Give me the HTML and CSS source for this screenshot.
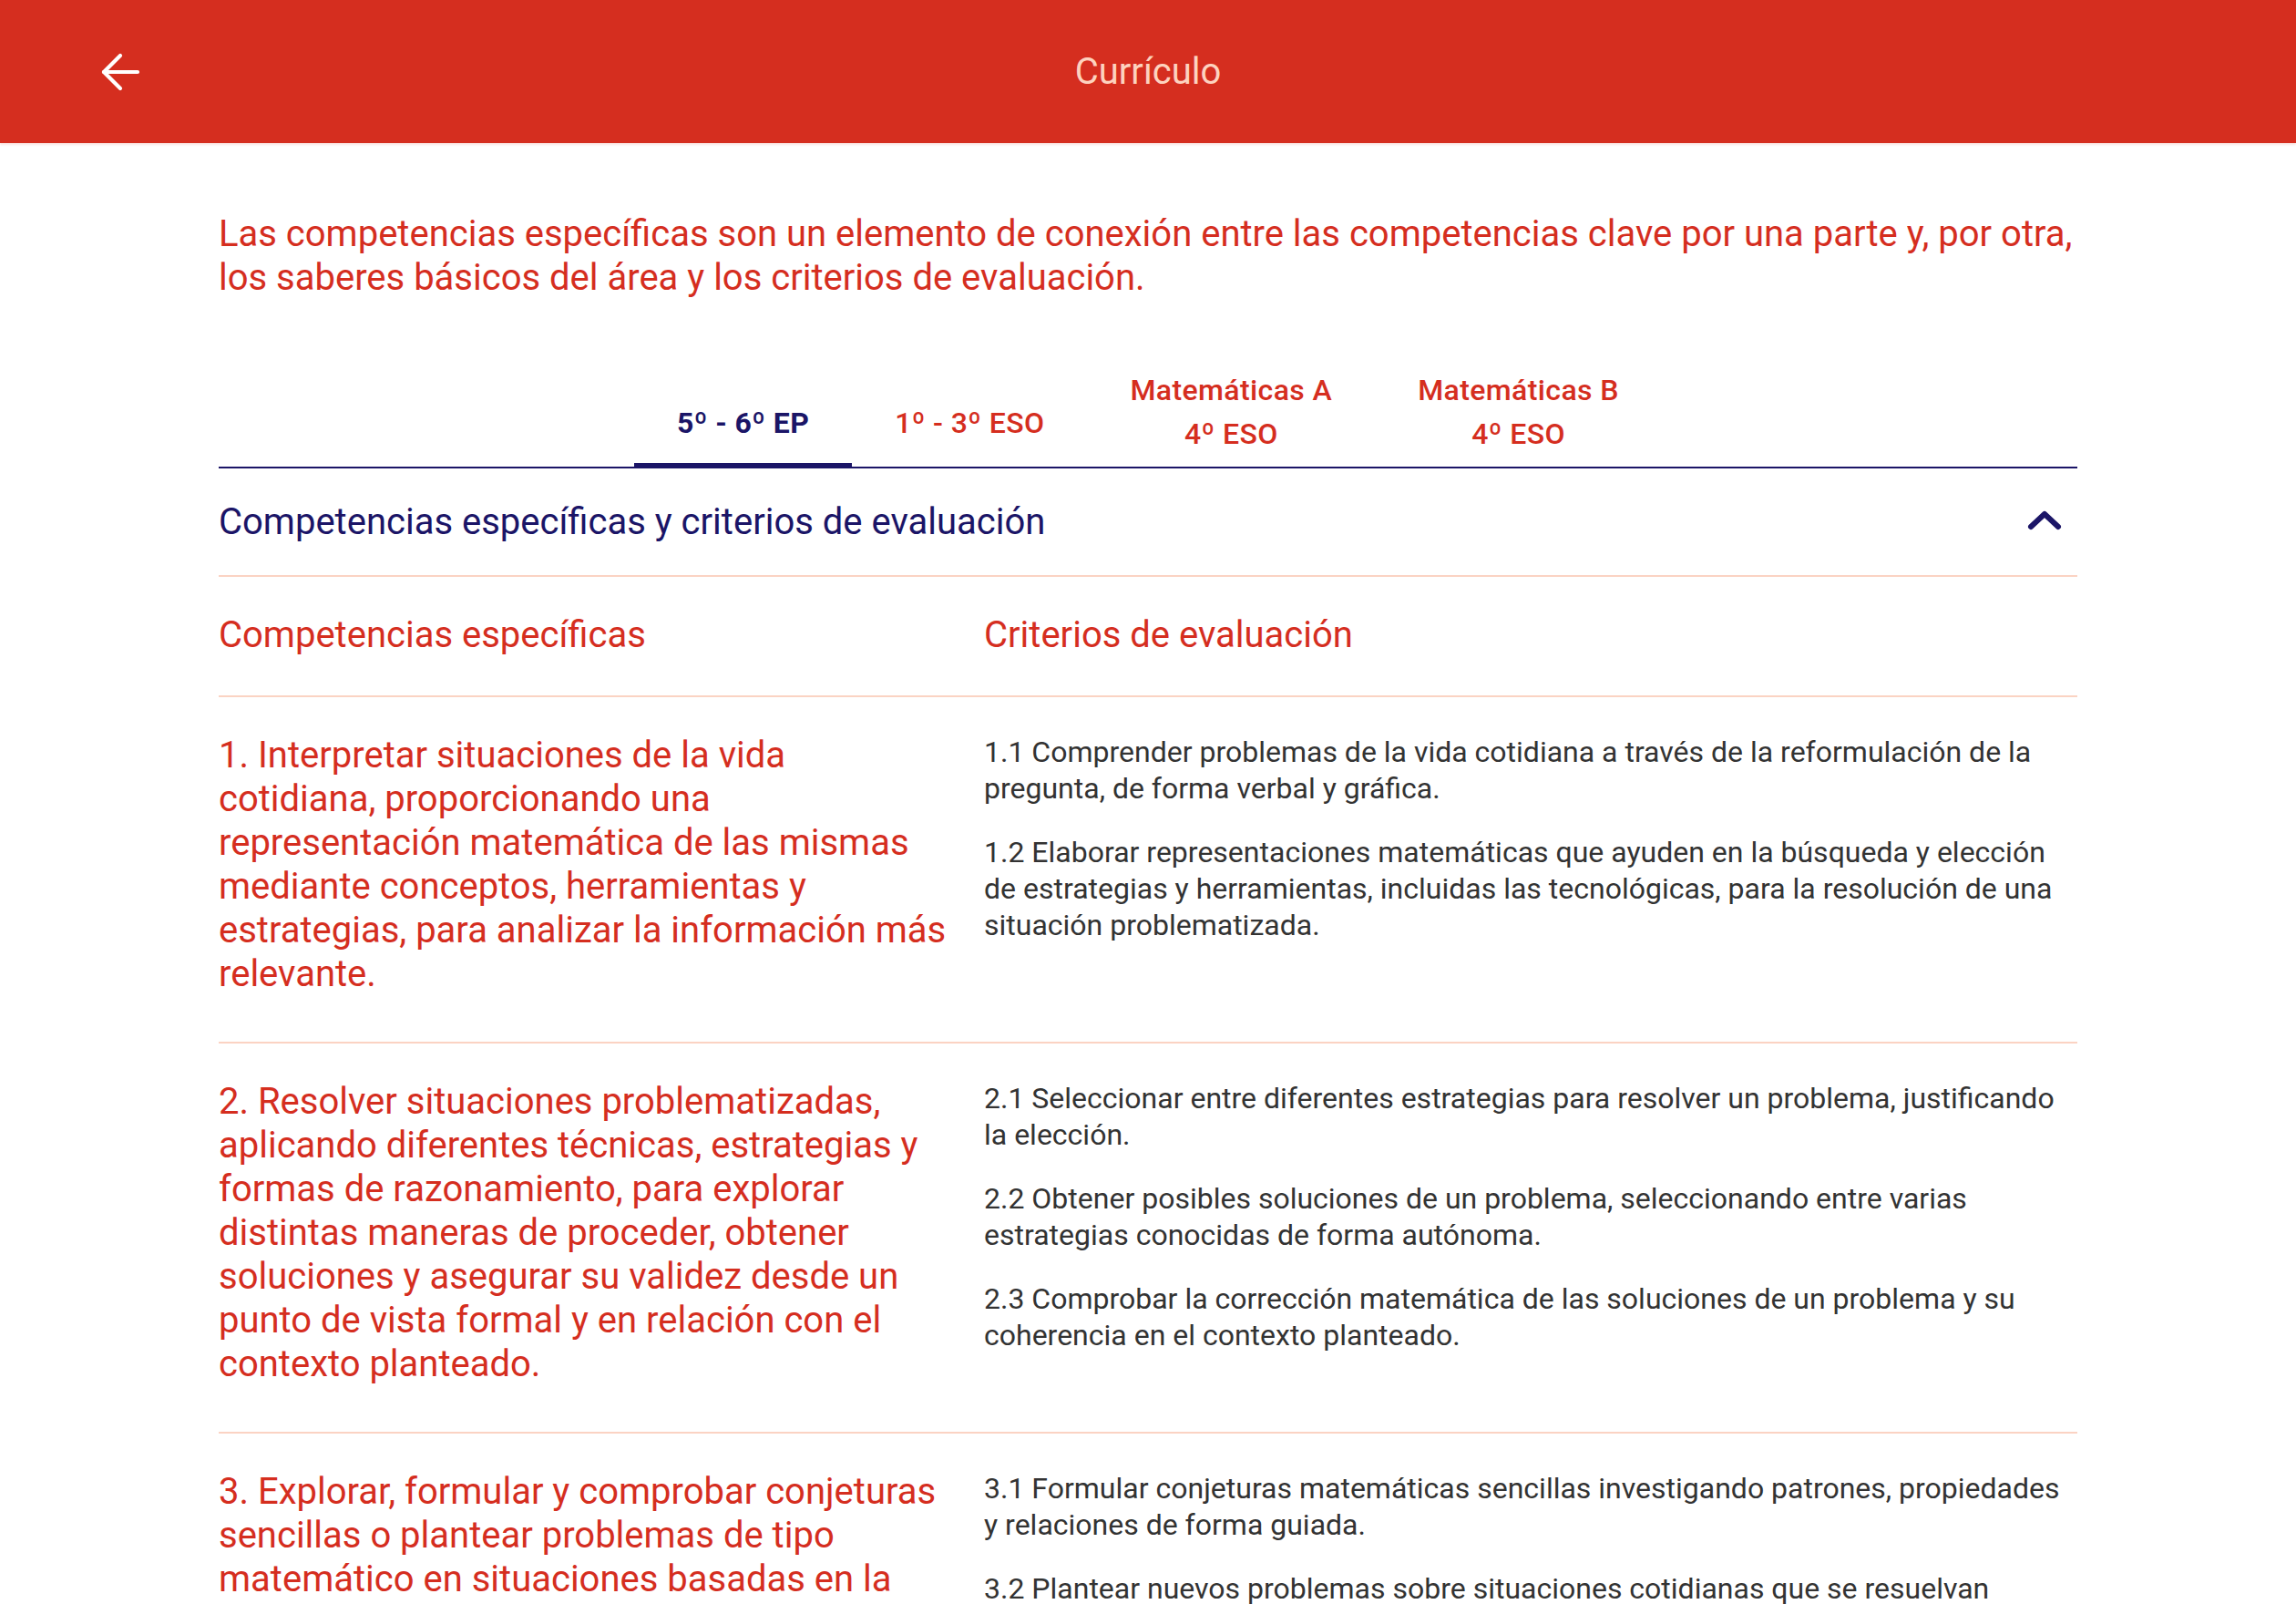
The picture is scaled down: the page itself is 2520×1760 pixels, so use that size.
FILE: index.html
```html
<!DOCTYPE html>
<html lang="es">
<head>
<meta charset="utf-8">
<title>Currículo</title>
<link rel="stylesheet" href="styles.css">
</head>
<body>
<header class="appbar">
  <div class="appbar-left">
    <button class="back" aria-label="Volver">
      <svg class="back-icon" viewBox="0 0 60 60" width="60" height="60">
        <polyline points="30,12 12,30 30,48" fill="none" stroke="#ffffff" stroke-width="4.2" stroke-linecap="round" stroke-linejoin="round"/>
        <line x1="12" y1="30" x2="49" y2="30" stroke="#ffffff" stroke-width="4.2" stroke-linecap="round"/>
      </svg>
    </button>
  </div>
  <h1 class="title">Currículo</h1>
  <div class="appbar-right"></div>
</header>

<main class="content">
  <p class="intro">Las competencias específicas son un elemento de conexión entre las competencias clave por una parte y, por otra, los saberes básicos del área y los criterios de evaluación.</p>

  <nav class="tabs">
    <div class="tab tab-active">5º - 6º EP</div>
    <div class="tab">1º - 3º ESO</div>
    <div class="tab tab-two">Matemáticas A<br>4º ESO</div>
    <div class="tab tab-two">Matemáticas B<br>4º ESO</div>
  </nav>

  <section class="panel">
    <div class="panel-head">
      <h2 class="panel-title">Competencias específicas y criterios de evaluación</h2>
      <svg class="chevron" viewBox="0 0 40 24" width="40" height="24">
        <polyline points="5,20 20,6 35,20" fill="none" stroke="#1b1567" stroke-width="6" stroke-linecap="round" stroke-linejoin="round"/>
      </svg>
    </div>

    <div class="row row-head">
      <div class="col-title">Competencias específicas</div>
      <div class="col-title">Criterios de evaluación</div>
    </div>

    <div class="row">
      <div class="comp">1. Interpretar situaciones de la vida cotidiana, proporcionando una representación matemática de las mismas mediante conceptos, herramientas y estrategias, para analizar la información más relevante.</div>
      <div class="crit">
        <p>1.1 Comprender problemas de la vida cotidiana a través de la reformulación de la pregunta, de forma verbal y gráfica.</p>
        <p>1.2 Elaborar representaciones matemáticas que ayuden en la búsqueda y elección de estrategias y herramientas, incluidas las tecnológicas, para la resolución de una situación problematizada.</p>
      </div>
    </div>

    <div class="row">
      <div class="comp">2. Resolver situaciones problematizadas, aplicando diferentes técnicas, estrategias y formas de razonamiento, para explorar distintas maneras de proceder, obtener soluciones y asegurar su validez desde un punto de vista formal y en relación con el contexto planteado.</div>
      <div class="crit">
        <p>2.1 Seleccionar entre diferentes estrategias para resolver un problema, justificando la elección.</p>
        <p>2.2 Obtener posibles soluciones de un problema, seleccionando entre varias estrategias conocidas de forma autónoma.</p>
        <p>2.3 Comprobar la corrección matemática de las soluciones de un problema y su coherencia en el contexto planteado.</p>
      </div>
    </div>

    <div class="row">
      <div class="comp">3. Explorar, formular y comprobar conjeturas sencillas o plantear problemas de tipo matemático en situaciones basadas en la vida cotidiana, de forma guiada, reconociendo el valor del razonamiento y la argumentación, para contrastar su validez, adquirir e integrar nuevo conocimiento.</div>
      <div class="crit">
        <p>3.1 Formular conjeturas matemáticas sencillas investigando patrones, propiedades y relaciones de forma guiada.</p>
        <p>3.2 Plantear nuevos problemas sobre situaciones cotidianas que se resuelvan matemáticamente.</p>
      </div>
    </div>
  </section>
</main>
</body>
</html>
```

FILE: styles.css
```css
* {
  box-sizing: border-box;
}

html, body {
  margin: 0;
  padding: 0;
  background: #ffffff;
}

body {
  font-family: Roboto, "Liberation Sans", sans-serif;
  color: #333333;
}

.appbar {
  height: 157px;
  background: #d52e1f;
  display: grid;
  grid-template-columns: 1fr auto 1fr;
  align-items: center;
  box-shadow: 0 2px 2px rgba(213, 46, 31, 0.12);
}

.appbar-left {
  display: flex;
  align-items: center;
  padding-left: 102px;
}

.back {
  width: 60px;
  height: 60px;
  padding: 0;
  margin: 0;
  border: 0;
  background: transparent;
  display: flex;
}

.back-icon {
  display: block;
}

.title {
  margin: 0;
  font-size: 40px;
  font-weight: 400;
  line-height: 48px;
  color: #fdd2bf;
}

.content {
  margin: 0 240px;
  padding-top: 76px;
}

.intro {
  margin: 0;
  font-size: 40px;
  line-height: 48px;
  color: #d52e1f;
}

.tabs {
  margin-top: 75px;
  display: flex;
  justify-content: center;
  align-items: flex-end;
  border-bottom: 2px solid #1b1567;
}

.tab {
  padding: 0 47px 24px;
  font-size: 32px;
  line-height: 48px;
  font-weight: 500;
  letter-spacing: 0.4px;
  color: #d52e1f;
  text-align: center;
  white-space: nowrap;
}

.tab-two {
  padding-bottom: 12px;
}

.tab-active {
  color: #1b1567;
  font-weight: 700;
  box-shadow: inset 0 -4px 0 #1b1567;
}

.panel-head {
  height: 119px;
  display: flex;
  align-items: center;
  justify-content: space-between;
  border-bottom: 2px solid #fbd3c3;
  padding-right: 16px;
}

.panel-title {
  margin: 0;
  font-size: 40px;
  line-height: 48px;
  font-weight: 400;
  color: #1b1567;
}

.chevron {
  display: block;
  margin-bottom: 6px;
}

.row {
  display: grid;
  grid-template-columns: 800px 1fr;
  column-gap: 40px;
  padding: 40px 0 50px;
  border-bottom: 2px solid #fbd3c3;
}

.row-head {
  padding: 40px 0 42px;
}

.col-title {
  font-size: 40px;
  line-height: 48px;
  color: #d52e1f;
}

.comp {
  font-size: 40px;
  line-height: 48px;
  color: #d52e1f;
}

.crit p {
  margin: 0 0 30px;
  font-size: 32px;
  line-height: 40px;
  color: #333333;
}

.crit p:last-child {
  margin-bottom: 0;
}
```
